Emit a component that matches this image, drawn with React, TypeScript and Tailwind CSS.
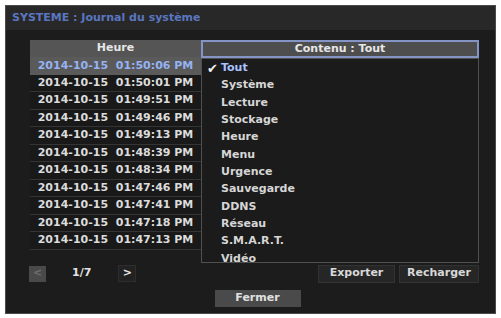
import React from "react";

const rows = [
  "01:50:06 PM",
  "01:50:01 PM",
  "01:49:51 PM",
  "01:49:46 PM",
  "01:49:13 PM",
  "01:48:39 PM",
  "01:48:34 PM",
  "01:47:46 PM",
  "01:47:41 PM",
  "01:47:18 PM",
  "01:47:13 PM",
];

const options = [
  "Tout",
  "Système",
  "Lecture",
  "Stockage",
  "Heure",
  "Menu",
  "Urgence",
  "Sauvegarde",
  "DDNS",
  "Réseau",
  "S.M.A.R.T.",
  "Vidéo",
];

export default function App() {
  return (
    <div className="h-[318px] w-[501px] bg-white p-[5px] font-['DejaVu_Sans',sans-serif] text-[11px] font-bold">
      <div className="flex h-[309px] flex-col border border-[#4a4a4a] bg-[#1c1c1c]">
        {/* title bar */}
        <div className="flex h-[24px] items-center bg-[#282828] px-[6px] text-[#5a76c0]">
          SYSTEME : Journal du système
        </div>

        <div className="flex flex-1 flex-col pl-[24px] pr-[16px] pt-[10px]">
          {/* table */}
          <div className="relative flex">
            <div className="w-[171px]">
              <div className="flex h-[17px] items-center justify-center bg-[#555555] text-[#e6e6e6]">Heure</div>
              {rows.map((t, i) => (
                <div
                  key={t}
                  className={
                    i === 0
                      ? "flex h-[17.5px] items-center justify-center bg-[#5a5a5a] text-[#96b2f2]"
                      : "flex h-[17.5px] items-center justify-center border-b border-[#343434] bg-[#191919] text-[#dcdcdc]"
                  }
                >
                  <span className="whitespace-pre">2014-10-15  {t}</span>
                </div>
              ))}
            </div>

            <div className="w-[278px]">
              <div className="flex h-[18px] items-center justify-center border-2 border-[#8494c4] bg-[#4e4e4e] text-[#e6e6e6]">
                Contenu : Tout
              </div>
              {/* open dropdown */}
              <div className="absolute left-[171px] top-[18px] z-10 h-[205px] w-[278px] border border-[#4f4f4f] bg-[#1b1b1b] pt-[0.5px]">
                {options.map((o, i) => (
                  <div key={o} className="flex h-[17.35px] items-center">
                    <span className="w-[19px] pl-[5px] text-[13px] leading-none text-[#f0f0f0]">{i === 0 ? "✔" : ""}</span>
                    <span className={i === 0 ? "text-[#a9c2ff]" : "text-[#d6d6d6]"}>{o}</span>
                  </div>
                ))}
              </div>
            </div>
          </div>

          {/* pagination + actions */}
          <div className="mt-[15px] flex h-[18px] items-center">
            <div className="ml-[-1px] flex h-[16px] w-[17px] items-center justify-center bg-[#4a4a4a] text-[#6e6e6e]">&lt;</div>
            <div className="ml-[26px] text-[#e2e2e2]">1/7</div>
            <div className="ml-[27px] flex h-[17px] w-[18px] items-center justify-center border border-[#2e2e2e] bg-[#222222] text-[#e6e6e6]">
              &gt;
            </div>
            <div className="ml-auto flex gap-[4px]">
              <div className="flex h-[18px] w-[77px] items-center justify-center border border-[#333333] bg-[#262626] text-[#d8d8d8]">
                Exporter
              </div>
              <div className="flex h-[18px] w-[80px] items-center justify-center border border-[#333333] bg-[#262626] text-[#d8d8d8]">
                Recharger
              </div>
            </div>
          </div>

          <div className="mt-[7px] flex justify-center pl-[6px]">
            <div className="flex h-[17px] w-[86px] items-center justify-center bg-[#4a4a4a] text-[#e0e0e0]">Fermer</div>
          </div>
        </div>
      </div>
    </div>
  );
}
